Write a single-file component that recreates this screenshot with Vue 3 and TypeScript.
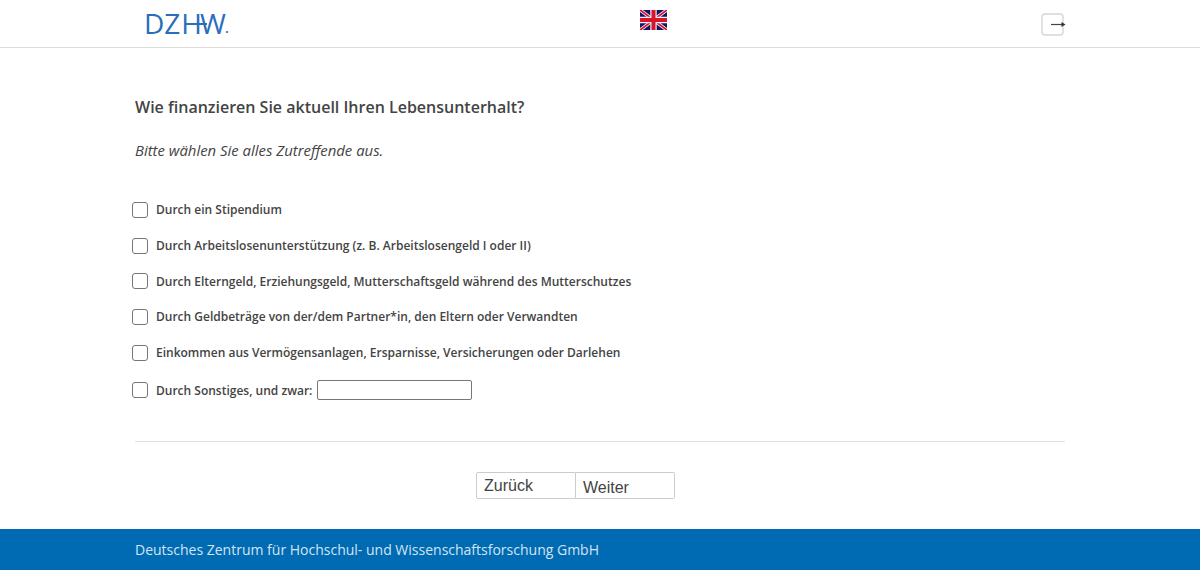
<script setup lang="ts">
const options: string[] = [
  'Durch ein Stipendium',
  'Durch Arbeitslosenunterstützung (z. B. Arbeitslosengeld I oder II)',
  'Durch Elterngeld, Erziehungsgeld, Mutterschaftsgeld während des Mutterschutzes',
  'Durch Geldbeträge von der/dem Partner*in, den Eltern oder Verwandten',
  'Einkommen aus Vermögensanlagen, Ersparnisse, Versicherungen oder Darlehen',
]
</script>

<template>
  <div class="page">
    <header class="top">
      <div class="logo">
        <span class="l d">D</span><span class="l z">Z</span><span class="l h">H</span><span class="l w">W</span><span class="dot">.</span>
        <span class="bar"></span>
      </div>
      <svg class="flag" width="27" height="20" viewBox="0 0 27 20">
        <rect width="27" height="20" fill="#14146a" />
        <path d="M0 0L27 20M27 0L0 20" stroke="#f3eef0" stroke-width="3.4" />
        <path d="M0 0L27 20M27 0L0 20" stroke="#d8142b" stroke-width="1.8" />
        <path d="M13.5 0V20M0 10H27" stroke="#f3eef0" stroke-width="6.4" />
        <path d="M13.5 0V20M0 10H27" stroke="#d8142b" stroke-width="4" />
      </svg>
      <svg class="exit" width="26" height="24" viewBox="0 0 26 24">
        <rect x="1" y="1" width="21" height="21" rx="3" fill="#fff" stroke="#d6d6d6" stroke-width="1.4" />
        <path d="M10 11.5H22" stroke="#444" stroke-width="1.2" />
        <path d="M20.5 9L24.5 11.5L20.5 14Z" fill="#333" />
      </svg>
    </header>

    <main class="main">
      <h1 class="question">Wie finanzieren Sie aktuell Ihren Lebensunterhalt?</h1>
      <p class="hint">Bitte wählen Sie alles Zutreffende aus.</p>
      <ul class="options">
        <li v-for="o in options" :key="o" class="opt"><span class="box"></span><span>{{ o }}</span></li>
        <li class="opt last">
          <span class="box"></span><span>Durch Sonstiges, und zwar:</span><input class="field" type="text" />
        </li>
      </ul>
      <hr class="rule" />
      <div class="nav">
        <button class="btn back" type="button">Zurück</button>
        <button class="btn next" type="button">Weiter</button>
      </div>
    </main>

    <footer class="foot">Deutsches Zentrum für Hochschul- und Wissenschaftsforschung GmbH</footer>
  </div>
</template>

<style>
html, body { margin: 0; background: #fff; }
</style>

<style scoped>
.page {
  width: 1200px;
  height: 579px;
  overflow: hidden;
  font-family: "Open Sans", sans-serif;
  color: #444;
  display: flex;
  flex-direction: column;
}
.top {
  height: 47px;
  border-bottom: 1px solid #dcdcdc;
  display: grid;
  grid-template-columns: 494px 27px 1fr;
  padding: 0 135px 0 146px;
  flex: none;
}
.logo {
  position: relative;
  display: flex;
  font-family: "Open Sans", sans-serif;
  font-weight: 400;
  color: #2a6ebb;
  font-size: 28px;
  line-height: 28px;
  margin: 9px 0 0 -2px;
  white-space: nowrap;
}
.l { display: block; }
.h { margin-left: 1px; }
.w { margin-left: -2px; letter-spacing: -1px; }
.dot { font-size: 14px; line-height: 28px; font-weight: 600; padding-top: 5px; margin-left: 0; }
.bar {
  position: absolute;
  left: 52px;
  top: 14px;
  width: 11px;
  height: 1.5px;
  background: #2a6ebb;
}
.flag { margin-top: 10px; }
.exit { justify-self: end; margin-top: 13px; margin-right: -2px; }
.main { flex: 1; padding: 0 135px; display: flex; flex-direction: column; }
.question {
  margin: 48px 0 0;
  font-size: 16px;
  line-height: 22px;
  font-weight: 600;
}
.hint {
  margin: 21px 0 0;
  font-size: 14.9px;
  line-height: 22px;
  font-style: italic;
}
.options { list-style: none; margin: 30.75px 0 0 -3px; padding: 0; }
.opt {
  display: flex;
  align-items: center;
  height: 35.75px;
  font-size: 12px;
  font-weight: 600;
}
.opt.last { height: 39px; }
.box {
  width: 14px;
  height: 14px;
  border: 1px solid #767676;
  border-radius: 3px;
  margin: 0.4px 8px 0 0;
  flex: none;
  background: #fff;
}
.field {
  width: 155px;
  height: 20px;
  box-sizing: border-box;
  border: 1px solid #767676;
  border-radius: 2px;
  margin: 0 0 0 5px;
  padding: 0;
  background: #fff;
}
.rule { width: 100%; margin: 31.25px 0 0; border: 0; border-top: 1px solid #e0e0e0; }
.nav { display: flex; margin: 30px 0 0 341px; }
.btn {
  font-family: "Liberation Sans", sans-serif;
  font-size: 16px;
  color: #444;
  background: #fff;
  border: 1px solid #ccc;
  height: 27px;
  text-align: left;
  padding: 0 0 0 7px;
}
.back { border-radius: 2px 0 0 2px; line-height: 24px; padding-top: 1px; width: 100px; }
.next { border-left: 0; border-radius: 0 2px 2px 0; padding-top: 5px; width: 99px; }
.foot {
  flex: none;
  height: 41px;
  margin-bottom: 9px;
  background: #006bb3;
  color: #d4e4f2;
  font-size: 14px;
  line-height: 41px;
  padding-left: 135px;
}
</style>
